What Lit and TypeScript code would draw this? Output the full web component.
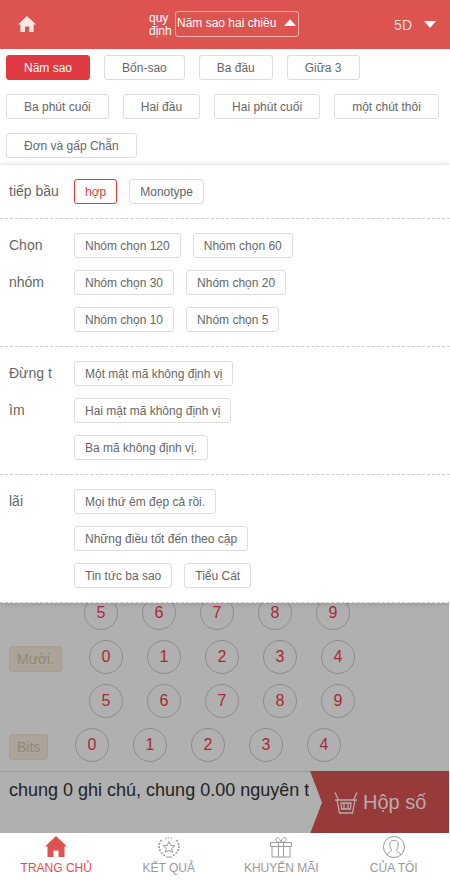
import { LitElement, html, css } from "lit";
import { customElement } from "lit/decorators.js";

const tabs = ["Năm sao", "Bốn-sao", "Ba đầu", "Giữa 3", "Ba phút cuối", "Hai đầu", "Hai phút cuối", "một chút thôi", "Đơn và gấp Chẵn"];
const groups: { label: string; items: string[] }[] = [
  { label: "tiếp bầu", items: ["hợp", "Monotype"] },
  { label: "Chọn\nnhóm", items: ["Nhóm chọn 120", "Nhóm chọn 60", "Nhóm chọn 30", "Nhóm chọn 20", "Nhóm chọn 10", "Nhóm chọn 5"] },
  { label: "Đừng t\nìm", items: ["Một mật mã không định vị", "Hai mật mã không định vị", "Ba mã không định vị."] },
  { label: "lãi", items: ["Mọi thứ êm đẹp cả rồi.", "Những điều tốt đến theo cặp", "Tin tức ba sao", "Tiểu Cát"] },
];

@customElement("app-root")
export class AppRoot extends LitElement {
  static styles = css`
    :host { display: flex; flex-direction: column; width: 450px; height: 880px; overflow: hidden; background: #fff; font-family: "Liberation Sans", Arial, sans-serif; color: #666; }
    .header { height: 49px; flex: none; background: #dc5350; color: #fff; display: flex; align-items: center; position: relative; }
    .home { margin-left: 18px; width: 18px; height: 18px; margin-top: -2px; }
    .rule { display: flex; align-items: center; margin-left: 113px; }
    .rule-label { width: 26px; font-size: 12px; line-height: 13px; color: #fff; }
    .select { width: 124px; height: 26px; box-sizing: border-box; border: 1px solid rgba(255,255,255,.55); border-radius: 3px; display: flex; align-items: center; justify-content: space-between; padding: 0 2px 2px 1px; font-size: 12px; margin-top: -2px; }
    .tri { width: 12px; height: 7px; flex: none; }
    .game { margin-left: auto; display: flex; align-items: center; margin-right: 14px; gap: 12px; font-size: 14px; color: #f6dcdb; }
    .tabs { height: 116px; flex: none; box-sizing: border-box; padding: 6px 0 0 6px; display: flex; flex-wrap: wrap; align-content: flex-start; gap: 14px; }
    .tab { height: 25px; box-sizing: border-box; padding: 0 17px; border: 1px solid #ddd; border-radius: 3px; font-size: 12px; line-height: 25px; color: #666; background: #fff; }
    .tab.on { background: #df3a41; border-color: #df3a41; color: #fff; }
    .panel { height: 438px; flex: none; position: relative; z-index: 2; background: #fff; box-shadow: 0 0 6px rgba(0,0,0,.18); }
    .group { height: 128px; box-sizing: border-box; display: flex; border-bottom: 1px dashed #ccc; padding: 14px 0 0 9px; }
    .group:first-child { height: 54px; }
    .glabel { width: 65px; flex: none; font-size: 14px; line-height: 37px; margin-top: -6px; white-space: pre; color: #666; }
    .opts { display: flex; flex-wrap: wrap; align-content: flex-start; gap: 12px; width: 240px; }
    .opt { height: 25px; box-sizing: border-box; padding: 0 10px; border: 1px solid #ddd; border-radius: 3px; font-size: 12px; line-height: 25px; color: #666; }
    .opt.on { border-color: #e4393c; color: #e4393c; }
    .dim { flex: 1; overflow: hidden; display: flex; flex-direction: column; background: #b0b0b0; border-right: 1px solid #fff; }
    .numbers { height: 167px; flex: none; }
    .row { height: 44px; display: flex; align-items: flex-end; position: relative; }
    .row:first-child { height: 27px; }
    .row:first-child .balls { margin-left: 84px; }
    .pos { position: absolute; left: 9px; top: 16px; height: 26px; box-sizing: border-box; padding: 0 7px; background: #aaa598; border: 1px solid #a49e91; border-radius: 3px; font-size: 14px; line-height: 24px; color: #8f8a7c; }
    .balls { display: flex; gap: 24px; margin-left: 89px; }
    .balls.bits { margin-left: 75px; }
    .ball { width: 34px; height: 34px; box-sizing: border-box; border: 1px solid #8d8d8d; border-radius: 50%; font-size: 16px; line-height: 31px; text-align: center; color: #a62a38; }
    .bar { height: 63px; flex: none; margin-top: 1px; box-sizing: border-box; border-top: 1px solid #9e9e9e; display: flex; }
    .sum { width: 300px; flex: none; margin-left: 9px; overflow: hidden; white-space: nowrap; font-size: 18px; line-height: 36px; color: #232323; }
    .basket { margin-left: 1px; width: 140px; flex: none; margin-top: -1px; height: 63px; background: #973a3a; clip-path: polygon(0 0, 100% 0, 100% 100%, 0 100%, 12px 50%); display: flex; align-items: center; color: #b8acac; font-size: 20px; padding-left: 24px; box-sizing: border-box; gap: 5px; }
    .basket svg { width: 24px; height: 24px; flex: none; }
    .footer { height: 47px; flex: none; display: grid; grid-template-columns: repeat(4, 1fr); background: #fff; position: relative; z-index: 2; }
    .nav { display: flex; flex-direction: column; align-items: center; font-size: 12px; color: #999; padding-top: 2px; }
    .nav svg { width: 24px; height: 24px; flex: none; }
    .nav span { line-height: 18px; }
    .nav.on { color: #f0484c; }
  `;

  private tri(up: boolean) {
    return html`<svg class="tri" viewBox="0 0 12 7"><path fill="#fff" d=${up ? "M6 0 L12 7 L0 7 Z" : "M0 0 L12 0 L6 7 Z"}></path></svg>`;
  }

  private balls(values: number[], bits = false) {
    return html`<div class="balls ${bits ? "bits" : ""}">${values.map((n) => html`<div class="ball">${n}</div>`)}</div>`;
  }

  render() {
    return html`
      <div class="header">
        <svg class="home" viewBox="0 0 18 18"><path fill="#fbe9e8" d="M9 1 L18 9.6 L15.6 9.6 L15.6 17 L11 17 L11 11.5 L7 11.5 L7 17 L2.4 17 L2.4 9.6 L0 9.6 Z"></path></svg>
        <div class="rule">
          <div class="rule-label">quy định</div>
          <div class="select"><span>Năm sao hai chiều</span>${this.tri(true)}</div>
        </div>
        <div class="game"><span>5D</span>${this.tri(false)}</div>
      </div>
      <div class="tabs">
        ${tabs.map((t, i) => html`<div class="tab ${i === 0 ? "on" : ""}">${t}</div>`)}
      </div>
      <div class="panel">
        ${groups.map((g, gi) => html`
          <div class="group">
            <div class="glabel">${g.label}</div>
            <div class="opts">
              ${g.items.map((o, i) => html`<div class="opt ${gi === 0 && i === 0 ? "on" : ""}">${o}</div>`)}
            </div>
          </div>`)}
      </div>
      <div class="dim">
        <div class="numbers">
          <div class="row">${this.balls([5, 6, 7, 8, 9])}</div>
          <div class="row"><div class="pos">Mười.</div>${this.balls([0, 1, 2, 3, 4])}</div>
          <div class="row">${this.balls([5, 6, 7, 8, 9])}</div>
          <div class="row"><div class="pos">Bits</div>${this.balls([0, 1, 2, 3, 4], true)}</div>
        </div>
        <div class="bar">
          <div class="sum">chung 0 ghi chú, chung 0.00 nguyên tệ</div>
          <div class="basket">
            <svg viewBox="0 0 24 24" fill="none" stroke="#b8acac" stroke-width="1.3"><path d="M1 9 H23 M3 9 L5.5 22 H18.5 L21 9 M4.5 9 L1 1.5 M19.5 9 L23 1.5 M7 12 H17 L16.4 18 H7.6 Z M10 12 V18 M14 12 V18"></path></svg>
            <span>Hộp số</span>
          </div>
        </div>
      </div>
      <div class="footer">
        <div class="nav on">
          <svg viewBox="0 0 24 24"><path fill="#dc5350" d="M12 1 L23 11.5 L20.5 11.5 L20.5 22 L14.5 22 L14.5 15.5 L9.5 15.5 L9.5 22 L3.5 22 L3.5 11.5 L1 11.5 Z"></path></svg>
          <span>TRANG CHỦ</span>
        </div>
        <div class="nav">
          <svg viewBox="0 0 24 24" fill="none" stroke="#9a9a9a" stroke-width="1"><path d="M12 6.5 L13.7 10.3 L17.8 10.7 L14.7 13.4 L15.6 17.4 L12 15.3 L8.4 17.4 L9.3 13.4 L6.2 10.7 L10.3 10.3 Z"></path><path stroke-dasharray="1.6 1.2" d="M8 4 C10 2.5 14 2.5 16 4"></path><path stroke-width="1.6" stroke-dasharray="2 1.3" d="M4.5 5 C0.5 10 1.5 17 8 20.5 M19.5 5 C23.5 10 22.5 17 16 20.5"></path><path d="M9 22 H15"></path></svg>
          <span>KẾT QUẢ</span>
        </div>
        <div class="nav">
          <svg viewBox="0 0 24 24" fill="none" stroke="#9a9a9a" stroke-width="1"><path d="M1.5 7.5 H22.5 V11.5 H1.5 Z M3 11.5 V22 H21 V11.5 M9.5 7.5 V22 M14.5 7.5 V22 M12 7.5 C8 7.5 6 5.5 7 3.5 C8 1.5 11 3 12 7.5 C13 3 16 1.5 17 3.5 C18 5.5 16 7.5 12 7.5 Z"></path></svg>
          <span>KHUYẾN MÃI</span>
        </div>
        <div class="nav">
          <svg viewBox="0 0 24 24" fill="none" stroke="#9a9a9a" stroke-width="1"><circle cx="12" cy="12" r="10.5"></circle><path d="M5 20 C6 17 10 17 9.5 15 C8 13 7.5 10 8 8 C9 4.5 15 4.5 16 8 C16.5 10 16 13 14.5 15 C14 17 18 17 19 20"></path></svg>
          <span>CỦA TÔI</span>
        </div>
      </div>
    `;
  }
}
